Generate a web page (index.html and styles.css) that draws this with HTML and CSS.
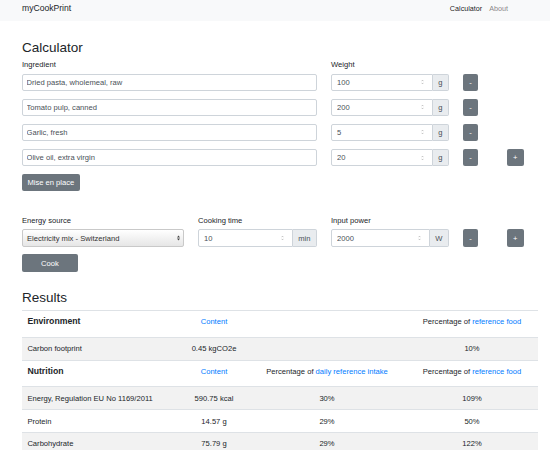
FILE: index.html
```html
<!DOCTYPE html>
<html lang="en">
<head>
    <meta charset="UTF-8">
    <meta name="viewport" content="width=device-width, initial-scale=1.0">
    <title>myCookPrint</title>
    <link rel="stylesheet" href="styles.css">
</head>
<body>
    <nav class="navbar">
        <a class="brand" href="#">myCookPrint</a>
        <div class="nav-links">
            <a class="active" href="#">Calculator</a>
            <a href="#">About</a>
        </div>
    </nav>

    <main class="container">
        <h2>Calculator</h2>
        <div class="form-grid ingredients">
            <label>Ingredient</label>
            <label>Weight</label>
            <span></span>
            <span></span>

            <input class="form-control" type="text" value="Dried pasta, wholemeal, raw">
            <div class="input-group">
                <div class="num"><input type="text" value="100"><svg class="spin" viewBox="0 0 3 6"><path d="M0.5 2.2 L1.5 1.2 L2.5 2.2 M0.5 3.8 L1.5 4.8 L2.5 3.8"/></svg></div>
                <span class="addon">g</span>
            </div>
            <button class="btn btn-sm">-</button>
            <span></span>

            <input class="form-control" type="text" value="Tomato pulp, canned">
            <div class="input-group">
                <div class="num"><input type="text" value="200"><svg class="spin" viewBox="0 0 3 6"><path d="M0.5 2.2 L1.5 1.2 L2.5 2.2 M0.5 3.8 L1.5 4.8 L2.5 3.8"/></svg></div>
                <span class="addon">g</span>
            </div>
            <button class="btn btn-sm">-</button>
            <span></span>

            <input class="form-control" type="text" value="Garlic, fresh">
            <div class="input-group">
                <div class="num"><input type="text" value="5"><svg class="spin" viewBox="0 0 3 6"><path d="M0.5 2.2 L1.5 1.2 L2.5 2.2 M0.5 3.8 L1.5 4.8 L2.5 3.8"/></svg></div>
                <span class="addon">g</span>
            </div>
            <button class="btn btn-sm">-</button>
            <span></span>

            <input class="form-control" type="text" value="Olive oil, extra virgin">
            <div class="input-group">
                <div class="num"><input type="text" value="20"><svg class="spin" viewBox="0 0 3 6"><path d="M0.5 2.2 L1.5 1.2 L2.5 2.2 M0.5 3.8 L1.5 4.8 L2.5 3.8"/></svg></div>
                <span class="addon">g</span>
            </div>
            <button class="btn btn-sm">-</button>
            <button class="btn btn-plus">+</button>
        </div>
        <button class="btn btn-mise">Mise en place</button>

        <div class="form-grid cooking">
            <label>Energy source</label>
            <label>Cooking time</label>
            <label>Input power</label>
            <span></span>
            <span></span>

            <div class="select">
                <span>Electricity mix - Switzerland</span>
                <svg class="arrows" viewBox="0 0 4 8"><path d="M0 3.2 L2 0.6 L4 3.2 Z M0 4.8 L2 7.4 L4 4.8 Z"/></svg>
            </div>
            <div class="input-group">
                <div class="num"><input type="text" value="10"><svg class="spin" viewBox="0 0 3 6"><path d="M0.5 2.2 L1.5 1.2 L2.5 2.2 M0.5 3.8 L1.5 4.8 L2.5 3.8"/></svg></div>
                <span class="addon">min</span>
            </div>
            <div class="input-group">
                <div class="num"><input type="text" value="2000"><svg class="spin" viewBox="0 0 3 6"><path d="M0.5 2.2 L1.5 1.2 L2.5 2.2 M0.5 3.8 L1.5 4.8 L2.5 3.8"/></svg></div>
                <span class="addon">W</span>
            </div>
            <button class="btn btn-sm">-</button>
            <button class="btn btn-plus">+</button>
        </div>
        <button class="btn btn-cook">Cook</button>

        <h2>Results</h2>
        <table class="results">
            <colgroup>
                <col class="c1"><col class="c2"><col class="c3"><col class="c4">
            </colgroup>
            <tbody>
                <tr class="head">
                    <th><h5>Environment</h5></th>
                    <th><a href="#">Content</a></th>
                    <th></th>
                    <th>Percentage of <a href="#">reference food</a></th>
                </tr>
                <tr>
                    <td>Carbon footprint</td>
                    <td>0.45 kgCO2e</td>
                    <td></td>
                    <td>10%</td>
                </tr>
                <tr class="head">
                    <th><h5>Nutrition</h5></th>
                    <th><a href="#">Content</a></th>
                    <th>Percentage of <a href="#">daily reference intake</a></th>
                    <th>Percentage of <a href="#">reference food</a></th>
                </tr>
                <tr>
                    <td>Energy, Regulation EU No 1169/2011</td>
                    <td>590.75 kcal</td>
                    <td>30%</td>
                    <td>109%</td>
                </tr>
                <tr>
                    <td>Protein</td>
                    <td>14.57 g</td>
                    <td>29%</td>
                    <td>50%</td>
                </tr>
                <tr>
                    <td>Carbohydrate</td>
                    <td>75.79 g</td>
                    <td>29%</td>
                    <td>122%</td>
                </tr>
            </tbody>
        </table>
    </main>
</body>
</html>
```

FILE: styles.css
```css
body {
    margin: 0;
    font-family: "Liberation Sans", Arial, sans-serif;
    font-size: 7.6px;
    line-height: 11px;
    color: #212529;
    background: white;
}
a {
    color: #007bff;
    text-decoration: none;
}

.navbar {
    display: flex;
    justify-content: space-between;
    align-items: flex-start;
    height: 21px;
    box-sizing: border-box;
    padding: 2px 42px 0 22px;
    background-color: #f8f9fa;
}
.brand {
    font-size: 8.6px;
    line-height: 13.6px;
    color: #212529;
}
.nav-links {
    display: flex;
    gap: 7px;
}
.nav-links a {
    font-size: 7.2px;
    line-height: 13.6px;
    color: rgba(0, 0, 0, 0.5);
}
.nav-links a.active {
    color: rgba(0, 0, 0, 0.9);
}

.container {
    padding: 0 12px 0 22px;
}
h2 {
    font-size: 13.5px;
    font-weight: normal;
    line-height: 17px;
    margin: 17.5px 0 3.5px;
}

.form-grid {
    display: grid;
    column-gap: 14px;
    align-items: start;
}
.ingredients {
    grid-template-columns: 295px 118px 30px 1fr;
}
.cooking {
    grid-template-columns: 162px 119px 118px 30px 1fr;
    margin-top: 23.5px;
}
label {
    display: block;
    line-height: 11px;
    margin-bottom: 3.5px;
}

.form-control,
.input-group,
.select,
.btn-sm,
.btn-plus {
    height: 17.6px;
    margin-bottom: 7.5px;
    box-sizing: border-box;
}
.form-control {
    width: 100%;
    border: 1px solid #ced4da;
    border-radius: 2px;
    padding: 0 4px 0 3.5px;
    font: inherit;
    color: #495057;
    outline: none;
}

.input-group {
    display: flex;
}
.num {
    flex: 1;
    display: flex;
    align-items: center;
    min-width: 0;
    border: 1px solid #ced4da;
    border-radius: 2px 0 0 2px;
    background: white;
}
.num input {
    flex: 1;
    min-width: 0;
    border: 0;
    padding: 0 0 0 5px;
    font: inherit;
    color: #495057;
    background: transparent;
    outline: none;
}
.spin {
    width: 3px;
    height: 6px;
    margin-right: 7.5px;
    fill: none;
    stroke: #9a9a9a;
    stroke-width: 0.6;
}
.addon {
    display: flex;
    align-items: center;
    padding: 0 5.5px;
    border: 1px solid #ced4da;
    border-left: 0;
    border-radius: 0 2px 2px 0;
    background-color: #e9ecef;
    color: #495057;
}

.select {
    display: flex;
    align-items: center;
    justify-content: space-between;
    padding: 0 3.5px 0 4px;
    border: 1px solid #c9c9c9;
    border-radius: 2px;
    background: linear-gradient(#ffffff, #e6e6e6);
    color: #333;
}
.arrows {
    width: 3px;
    height: 6px;
    fill: #444;
}

.btn {
    border: 0;
    border-radius: 2px;
    background-color: #6c757d;
    color: white;
    font: inherit;
    padding: 0;
    cursor: pointer;
}
.btn-sm {
    width: 15px;
}
.btn-plus {
    width: 16.5px;
}
.btn-mise {
    height: 17.4px;
    padding: 0 5.4px;
}
.btn-cook {
    height: 17.4px;
    padding: 0 19px;
}

.results {
    width: 100%;
    border-collapse: collapse;
    table-layout: fixed;
}
.results .c1 { width: 150px; }
.results .c2 { width: 84px; }
.results .c3 { width: 142px; }
.results .c4 { width: 140px; }
.results th,
.results td {
    padding: 5.4px;
    border-top: 1px solid #dee2e6;
    line-height: 11px;
    vertical-align: top;
    text-align: center;
    font-weight: normal;
}
.results th:first-child,
.results td:first-child {
    text-align: left;
}
.results th:last-child,
.results td:last-child {
    padding-left: 13.4px;
}
.results tr:nth-child(even) {
    background-color: #f2f2f2;
}
h5 {
    margin: 0 0 4.2px;
    font-size: 8.7px;
    font-weight: bold;
    line-height: 11px;
}
```
